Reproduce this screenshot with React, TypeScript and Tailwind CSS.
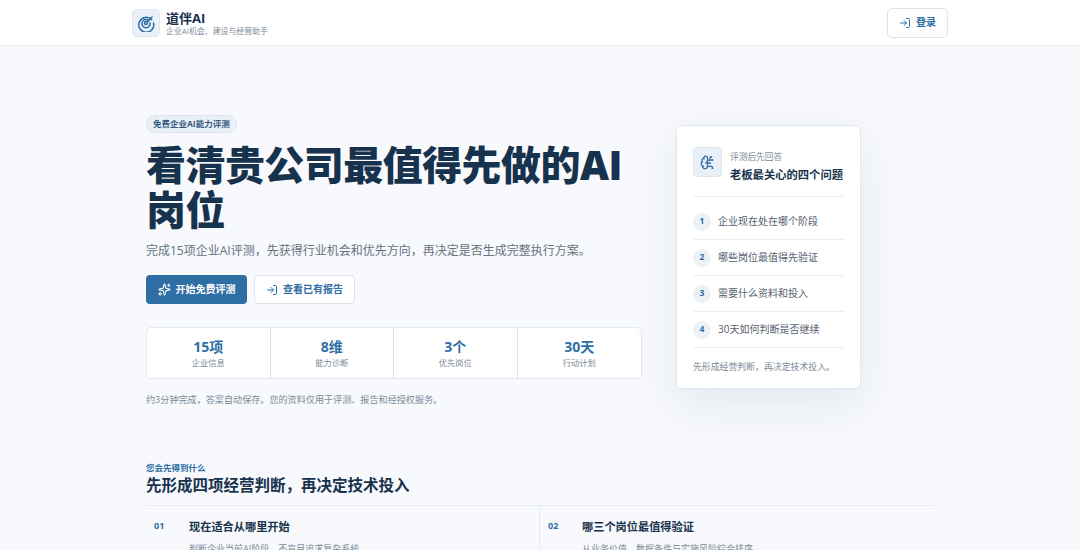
import React from 'react';
import { LogIn, Sparkles, BrainCircuit } from 'lucide-react';

const STATS = [
  { value: '15项', label: '企业信息' },
  { value: '8维', label: '能力诊断' },
  { value: '3个', label: '优先岗位' },
  { value: '30天', label: '行动计划' },
];

const QUESTIONS = ['企业现在处在哪个阶段', '哪些岗位最值得先验证', '需要什么资料和投入', '30天如何判断是否继续'];

function Logo() {
  return (
    <svg width="18" height="18" viewBox="0 0 24 24" fill="none" stroke="#2f6ea5" strokeWidth="2" strokeLinecap="round">
      <path d="M19.5 7.5A10 10 0 1 0 22 12" />
      <path d="M16 9a5.5 5.5 0 1 0 1.5 3" />
      <circle cx="12" cy="12" r="2" />
      <path d="M13.5 10.5 20 4" />
    </svg>
  );
}

export default function App() {
  return (
    <div className="h-[550px] overflow-hidden bg-[#f7f9fc] text-[#17324d] font-['Open_Sans','Noto_Sans_CJK_SC',sans-serif]">
      <header className="h-[46px] bg-white border-b border-[#e6ebf1] px-[132px] flex items-center justify-between">
        <div className="flex items-center gap-[6px]">
          <div className="w-[28px] h-[28px] rounded-[5px] bg-[#e9f0f7] border border-[#dbe6f0] flex items-center justify-center">
            <Logo />
          </div>
          <div className="flex flex-col">
            <span className="text-[13px] leading-[16px] font-bold">道伴AI</span>
            <span className="text-[7.9px] leading-[10px] text-[#7d8a99]">企业AI机会、建设与经营助手</span>
          </div>
        </div>
        <button className="w-[61px] h-[30px] rounded-[5px] bg-white border border-[#dde5ee] flex items-center justify-center gap-[5px] text-[10px] font-bold text-[#2f6ea5]">
          <LogIn size={12} />
          登录
        </button>
      </header>

      <main className="px-[146px]">
        <section className="flex items-start gap-[34px] pt-[63px]">
          <div className="w-[496px] shrink-0">
            <span className="inline-flex items-center h-[18px] px-[6px] rounded-full bg-[#e9f1f8] border border-[#d9e6f1] text-[8.5px] font-bold text-[#33587c]">
              免费企业AI能力评测
            </span>
            <h1 className="mt-[9px] text-[40px] leading-[45px] font-black tracking-[-0.55px]">看清贵公司最值得先做的AI岗位</h1>
            <p className="mt-[9px] text-[12px] leading-[20px] text-[#66727f]">
              完成15项企业AI评测，先获得行业机会和优先方向，再决定是否生成完整执行方案。
            </p>
            <div className="mt-[14px] flex gap-[7px]">
              <button className="w-[101px] h-[29px] rounded-[4px] bg-[#2f6ea5] flex items-center justify-center gap-[5px] text-[10px] font-bold text-white">
                <Sparkles size={13} />
                开始免费评测
              </button>
              <button className="w-[101px] h-[29px] rounded-[4px] bg-white border border-[#dde5ee] flex items-center justify-center gap-[5px] text-[10px] font-bold text-[#2f6ea5]">
                <LogIn size={12} />
                查看已有报告
              </button>
            </div>
            <div className="mt-[23px] h-[52px] grid grid-cols-4 rounded-[5px] bg-white border border-[#e1e8f0]">
              {STATS.map((s, i) => (
                <div key={s.label} className={`flex flex-col items-center justify-center gap-[1px] ${i < 3 ? 'border-r border-[#d9e3ed]' : ''}`}>
                  <span className="text-[14px] leading-[18px] font-bold text-[#2f6ea5]">{s.value}</span>
                  <span className="text-[8.3px] leading-[12px] text-[#7d8a99]">{s.label}</span>
                </div>
              ))}
            </div>
            <p className="mt-[15px] text-[9.1px] leading-[12px] text-[#7d8a99]">约3分钟完成，答案自动保存。您的资料仅用于评测、报告和经授权服务。</p>
          </div>

          <aside className="mt-[16px] w-[185px] h-[264px] shrink-0 rounded-[5px] bg-white border border-[#dfe8f1] shadow-[0_16px_48px_rgba(30,60,90,0.09)] px-[16px] pt-[21px]">
            <div className="flex items-start gap-[8px] pb-[13px] border-b border-[#ebeff4]">
              <div className="w-[29px] h-[30px] rounded-[4px] bg-[#e9f0f7] border border-[#dbe6f0] flex items-center justify-center text-[#2f6ea5]">
                <BrainCircuit size={15} />
              </div>
              <div className="flex flex-col pt-[4px]">
                <span className="text-[8.7px] leading-[13px] text-[#7d8a99]">评测后先回答</span>
                <span className="mt-[3px] text-[11.3px] leading-[16px] font-bold whitespace-nowrap">老板最关心的四个问题</span>
              </div>
            </div>
            <div className="mt-[7px]">
              {QUESTIONS.map((q, i) => (
                <div key={q} className="h-[36px] flex items-center gap-[7px] border-b border-[#ebeff4]">
                  <span className="w-[18px] h-[18px] rounded-full bg-[#edf2f7] flex items-center justify-center text-[8.5px] font-bold text-[#2f6ea5]">{i + 1}</span>
                  <span className="text-[10px] text-[#56626f]">{q}</span>
                </div>
              ))}
            </div>
            <p className="mt-[13px] text-[8.9px] leading-[12px] text-[#7d8a99]">先形成经营判断，再决定技术投入。</p>
          </aside>
        </section>

        <section className="mt-[56px] w-[788px]">
          <p className="text-[8.5px] leading-[12px] font-bold text-[#2f6ea5]">您会先得到什么</p>
          <h2 className="text-[15.5px] leading-[22px] font-bold">先形成四项经营判断，再决定技术投入</h2>
          <div className="mt-[9px] grid grid-cols-[393px_1fr] border-t border-[#e6ebf1]">
            <div className="flex pl-[8px] pt-[12px] pb-[30px]">
              <span className="w-[35px] text-[9px] leading-[16px] font-bold text-[#2f6ea5]">01</span>
              <div>
                <h3 className="text-[11.2px] leading-[18px] font-bold">现在适合从哪里开始</h3>
                <p className="mt-[6px] text-[9px] leading-[14px] text-[#7d8a99]">判断企业当前AI阶段，不盲目追求复杂系统</p>
              </div>
            </div>
            <div className="flex pl-[8px] pt-[12px] pb-[30px] border-l border-[#e6ebf1]">
              <span className="w-[34px] text-[9px] leading-[16px] font-bold text-[#2f6ea5]">02</span>
              <div>
                <h3 className="text-[11.2px] leading-[18px] font-bold">哪三个岗位最值得验证</h3>
                <p className="mt-[6px] text-[9px] leading-[14px] text-[#7d8a99]">从业务价值、数据条件与实施风险综合排序</p>
              </div>
            </div>
          </div>
        </section>
      </main>
    </div>
  );
}
